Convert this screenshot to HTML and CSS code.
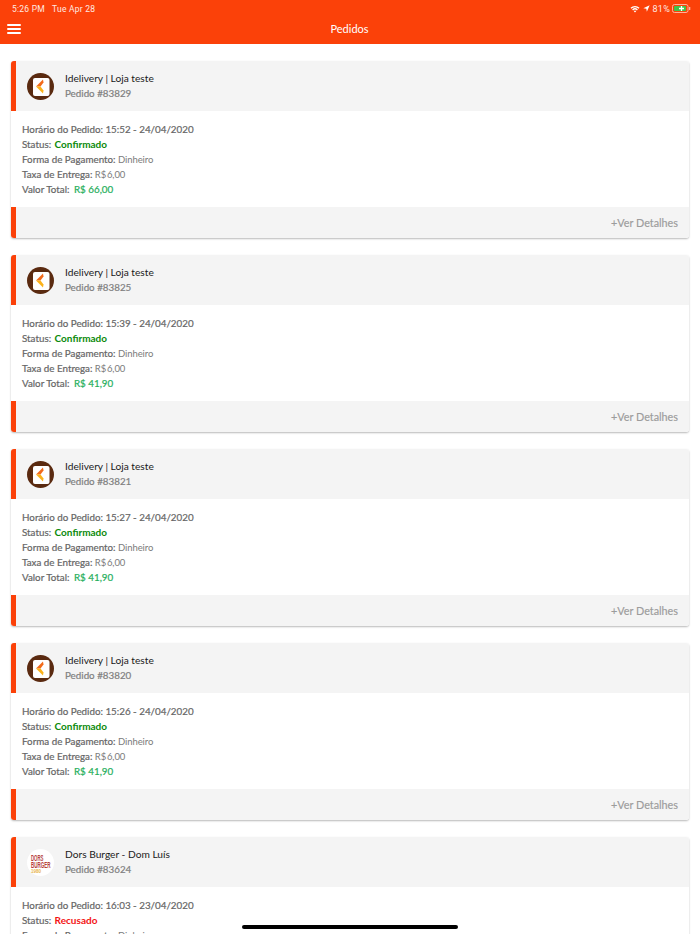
FILE: index.html
```html
<!DOCTYPE html>
<html lang="pt">
<head>
<meta charset="utf-8">
<title>Pedidos</title>
<link rel="stylesheet" href="styles.css">
</head>
<body>
<div class="app">
  <svg class="defs" width="0" height="0" aria-hidden="true">
    <symbol id="idelivery" viewBox="0 0 27 27">
      <circle cx="13.500" cy="13.500" r="13.500" fill="#5a2a10"/>
      <rect x="6" y="5" width="16.500" height="18" rx="2" fill="#fff"/>
      <path d="M16 6.500 9 13.500h4.500L16.500 9.500z" fill="#f26a1b"/>
      <path d="M9 13.500 16 20.500l.5-3-3-4z" fill="#fbb21a"/>
    </symbol>
  </svg>
  <header class="topbar">
    <div class="status">
      <div class="status-time"><span>5:26 PM</span><span>Tue Apr 28</span></div>
      <div class="status-right">
        <svg class="wifi" viewBox="0 0 12 9" width="10" height="8"><path d="M0.6 3.1a7.6 7.6 0 0 1 10.8 0L10.3 4.2a6 6 0 0 0-8.6 0z M2.6 5.1a4.8 4.8 0 0 1 6.8 0L8.3 6.2a3.2 3.2 0 0 0-4.600 0z M4.600 7.100a2 2 0 0 1 2.800 0L6 8.600z" fill="#fff"/></svg>
        <svg class="arrow" viewBox="0 0 8 8" width="7" height="7"><path d="M7.600 0.400 0.400 3.600 3.800 4.200 4.400 7.600z" fill="#fff"/></svg>
        <span class="pct">81%</span>
        <svg class="battery" viewBox="0 0 19 9" width="19" height="9"><rect x="0.500" y="0.500" width="15.500" height="8" rx="2" fill="none" stroke="#ffb09a"/><rect x="2" y="2" width="12" height="5" rx="0.800" fill="#3fc24a"/><rect x="17" y="3" width="1.300" height="3" fill="#ffb09a"/><path d="M9.500 2v5M7 4.500h5" stroke="#fff" stroke-width="1.300"/></svg>
      </div>
    </div>
    <div class="navbar">
      <button class="menu" aria-label="Menu"><i></i><i></i><i></i></button>
      <h1>Pedidos</h1>
    </div>
  </header>

  <main class="list">
    <article class="card">
      <div class="card-head">
        <svg class="logo"><use href="#idelivery"/></svg>
        <div class="head-text"><h2>Idelivery | Loja teste</h2><p class="order">Pedido #83829</p></div>
      </div>
      <div class="card-body">
        <p><b>Horário do Pedido:</b> <b>15:52 - 24/04/2020</b></p>
        <p><b>Status:</b> <strong class="ok">Confirmado</strong></p>
        <p><b>Forma de Pagamento:</b> <span class="val">Dinheiro</span></p>
        <p><b>Taxa de Entrega:</b> <span class="val">R$ 6,00</span></p>
        <p><b>Valor Total:</b> <span class="total">R$ 66,00</span></p>
      </div>
      <div class="card-foot">+Ver Detalhes</div>
    </article>

    <article class="card">
      <div class="card-head">
        <svg class="logo"><use href="#idelivery"/></svg>
        <div class="head-text"><h2>Idelivery | Loja teste</h2><p class="order">Pedido #83825</p></div>
      </div>
      <div class="card-body">
        <p><b>Horário do Pedido:</b> <b>15:39 - 24/04/2020</b></p>
        <p><b>Status:</b> <strong class="ok">Confirmado</strong></p>
        <p><b>Forma de Pagamento:</b> <span class="val">Dinheiro</span></p>
        <p><b>Taxa de Entrega:</b> <span class="val">R$ 6,00</span></p>
        <p><b>Valor Total:</b> <span class="total">R$ 41,90</span></p>
      </div>
      <div class="card-foot">+Ver Detalhes</div>
    </article>

    <article class="card">
      <div class="card-head">
        <svg class="logo"><use href="#idelivery"/></svg>
        <div class="head-text"><h2>Idelivery | Loja teste</h2><p class="order">Pedido #83821</p></div>
      </div>
      <div class="card-body">
        <p><b>Horário do Pedido:</b> <b>15:27 - 24/04/2020</b></p>
        <p><b>Status:</b> <strong class="ok">Confirmado</strong></p>
        <p><b>Forma de Pagamento:</b> <span class="val">Dinheiro</span></p>
        <p><b>Taxa de Entrega:</b> <span class="val">R$ 6,00</span></p>
        <p><b>Valor Total:</b> <span class="total">R$ 41,90</span></p>
      </div>
      <div class="card-foot">+Ver Detalhes</div>
    </article>

    <article class="card">
      <div class="card-head">
        <svg class="logo"><use href="#idelivery"/></svg>
        <div class="head-text"><h2>Idelivery | Loja teste</h2><p class="order">Pedido #83820</p></div>
      </div>
      <div class="card-body">
        <p><b>Horário do Pedido:</b> <b>15:26 - 24/04/2020</b></p>
        <p><b>Status:</b> <strong class="ok">Confirmado</strong></p>
        <p><b>Forma de Pagamento:</b> <span class="val">Dinheiro</span></p>
        <p><b>Taxa de Entrega:</b> <span class="val">R$ 6,00</span></p>
        <p><b>Valor Total:</b> <span class="total">R$ 41,90</span></p>
      </div>
      <div class="card-foot">+Ver Detalhes</div>
    </article>

    <article class="card">
      <div class="card-head">
        <svg class="logo" viewBox="0 0 27 27">
          <circle cx="13.500" cy="13.500" r="13.500" fill="#fff"/>
          <text class="dors" x="4" y="11.500" textLength="12.500" lengthAdjust="spacingAndGlyphs">DORS</text>
          <text class="dors" x="4" y="18.500" textLength="19.500" lengthAdjust="spacingAndGlyphs">BURGER</text>
          <text class="dors-year" x="4" y="23.500" textLength="10" lengthAdjust="spacingAndGlyphs">1980</text>
        </svg>
        <div class="head-text"><h2>Dors Burger - Dom Luís</h2><p class="order">Pedido #83624</p></div>
      </div>
      <div class="card-body">
        <p><b>Horário do Pedido:</b> <b>16:03 - 23/04/2020</b></p>
        <p><b>Status:</b> <strong class="bad">Recusado</strong></p>
        <p><b>Forma de Pagamento:</b> <span class="val">Dinheiro</span></p>
      </div>
    </article>
  </main>
  <div class="home-indicator"></div>
</div>
</body>
</html>
```

FILE: styles.css
```css
* { box-sizing: border-box; }
html, body { margin: 0; padding: 0; height: 100%; overflow: hidden; background: #fff; }
.app { position: relative; width: 700px; height: 934px; overflow: hidden; font-family: Lato, sans-serif; }
.defs { position: absolute; }
.topbar { background: #fb4109; color: #fff; height: 44px; padding: 0 8px 0 7px; }
.status { display: flex; justify-content: space-between; align-items: center; height: 17px; font-family: Roboto, sans-serif; font-size: 8.500px; letter-spacing: .25px; color: #ffe9e2; }
.status-time { display: flex; gap: 7px; padding-left: 5px; }
.status-right { display: flex; align-items: center; gap: 3px; padding-right: 1px; font-size: 9px; }
.pct { margin-right: -1px; }
.navbar { position: relative; display: flex; justify-content: center; align-items: center; height: 24px; padding-bottom: 2px; }
.navbar h1 { margin: 0; font-size: 11px; font-weight: 400; color: #fff; }
.menu { position: absolute; left: 0; top: 7px; width: 14px; height: 10px; padding: 0; border: 0; background: none; display: flex; flex-direction: column; justify-content: space-between; }
.menu i { display: block; height: 2px; background: #fff; border-radius: 1px; }
.list { display: flex; flex-direction: column; gap: 17px; padding: 17px 11px 0; }
.card { flex: none; height: 177px; display: flex; flex-direction: column; background: #fff; border-radius: 3px; box-shadow: 0 1px 2px rgba(0,0,0,.28); overflow: hidden; }
.card-head { flex: none; display: flex; align-items: center; gap: 11px; height: 50px; padding-left: 11px; background: #f4f4f4; border-left: 5px solid #fb4109; }
.head-text { padding-bottom: 2px; }
.logo { flex: none; width: 27px; height: 27px; }
.dors { font-family: "Liberation Sans", sans-serif; font-size: 9px; font-weight: 700; fill: #b5403c; }
.dors-year { font-family: "Liberation Sans", sans-serif; font-size: 6px; font-weight: 700; fill: #e8b44c; }
.card-head h2 { margin: 0 0 1px; font-family: Lato, sans-serif; font-size: 10.200px; font-weight: 400; line-height: 14px; color: #1a1a1a; }
.order { margin: 0; font-size: 9.800px; font-weight: 400; line-height: 14px; color: #808080; -webkit-text-stroke: .2px #808080; }
.card-body { flex: 1; padding: 11px 11px 0; font-size: 9.800px; color: #7b7b7b; }
.card-body p { margin: 0; height: 15px; line-height: 15px; }
.card-body b { font-weight: 400; color: #666; -webkit-text-stroke: .2px #666; }
.val { font-size: 9.500px; letter-spacing: -.1px; word-spacing: -1.500px; }
.ok { color: #0a8a0a; font-weight: 700; font-size: 10px; margin-left: 1px; }
.bad { color: #f31414; font-weight: 700; font-size: 10px; margin-left: 1px; }
.total { color: #1fae5b; font-weight: 400; margin-left: 2px; -webkit-text-stroke: .2px #1fae5b; }
.card-foot { flex: none; height: 31px; display: flex; align-items: center; justify-content: flex-end; padding-right: 11px; background: #f4f4f4; border-left: 5px solid #fb4109; font-size: 10.800px; font-weight: 400; color: #9c9c9c; -webkit-text-stroke: .15px #9c9c9c; }
.home-indicator { position: absolute; left: 242px; top: 925px; width: 216px; height: 4px; border-radius: 2px; background: #000; }
```
